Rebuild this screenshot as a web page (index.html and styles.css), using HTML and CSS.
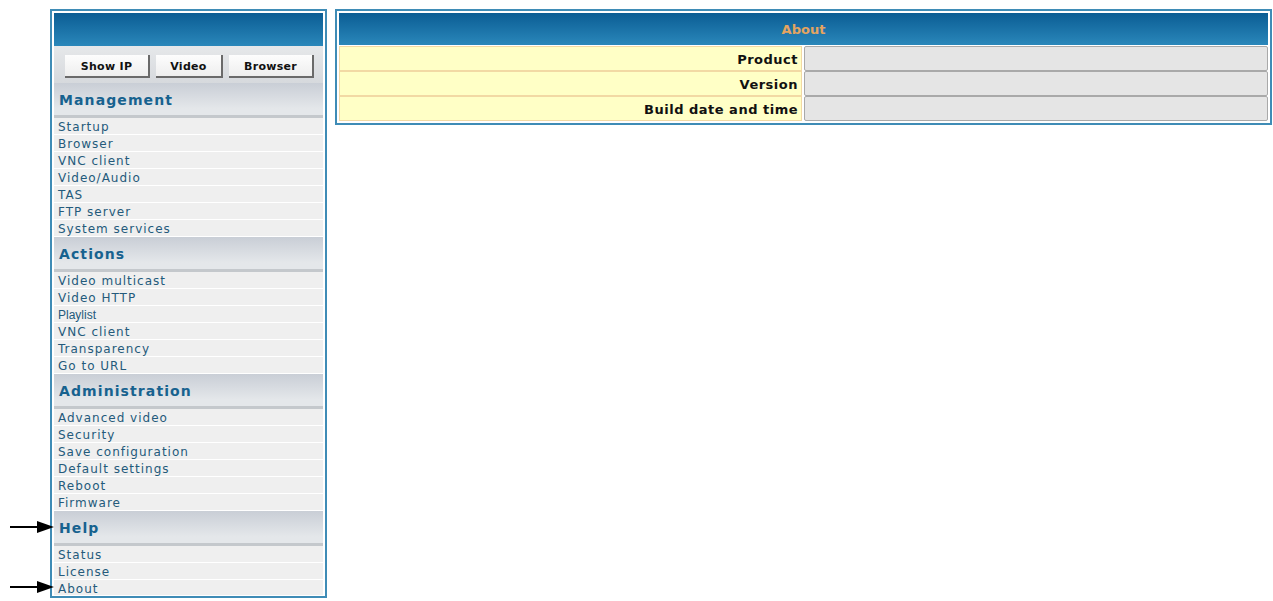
FILE: index.html
```html
<!DOCTYPE html>
<html lang="en">
<head>
    <meta charset="UTF-8">
    <title>About</title>
    <link rel="stylesheet" href="styles.css">
</head>
<body>
    <div class="page">
        <!-- Pointers next to the menu -->
        <div class="pointers">
            <svg class="arrow arrow-help" width="44" height="12" viewBox="0 0 44 12"><path d="M0 6 H30" stroke="#000" stroke-width="2"/><path d="M27 0 L44 6 L27 12 Z" fill="#000"/></svg>
            <svg class="arrow arrow-about" width="44" height="12" viewBox="0 0 44 12"><path d="M0 6 H30" stroke="#000" stroke-width="2"/><path d="M27 0 L44 6 L27 12 Z" fill="#000"/></svg>
        </div>

        <!-- Menu -->
        <div class="menu">
            <div class="menu-top"></div>
            <div class="toolbar">
                <button class="tool-btn btn-ip">Show IP</button>
                <button class="tool-btn btn-video">Video</button>
                <button class="tool-btn btn-browser">Browser</button>
            </div>

            <div class="section">Management</div>
            <a class="item" href="#">Startup</a>
            <a class="item" href="#">Browser</a>
            <a class="item" href="#">VNC client</a>
            <a class="item" href="#">Video/Audio</a>
            <a class="item" href="#">TAS</a>
            <a class="item" href="#">FTP server</a>
            <a class="item" href="#">System services</a>

            <div class="section">Actions</div>
            <a class="item" href="#">Video multicast</a>
            <a class="item" href="#">Video HTTP</a>
            <a class="item item-arial" href="#">Playlist</a>
            <a class="item" href="#">VNC client</a>
            <a class="item" href="#">Transparency</a>
            <a class="item" href="#">Go to URL</a>

            <div class="section">Administration</div>
            <a class="item" href="#">Advanced video</a>
            <a class="item" href="#">Security</a>
            <a class="item" href="#">Save configuration</a>
            <a class="item" href="#">Default settings</a>
            <a class="item" href="#">Reboot</a>
            <a class="item" href="#">Firmware</a>

            <div class="section">Help</div>
            <a class="item" href="#">Status</a>
            <a class="item" href="#">License</a>
            <a class="item" href="#">About</a>
        </div>

        <!-- About box -->
        <div class="about">
            <div class="about-title">About</div>
            <div class="row">
                <div class="label">Product</div>
                <div class="value"></div>
            </div>
            <div class="row">
                <div class="label">Version</div>
                <div class="value"></div>
            </div>
            <div class="row">
                <div class="label">Build date and time</div>
                <div class="value"></div>
            </div>
        </div>
    </div>
</body>
</html>
```

FILE: styles.css
```css
/* Page */
body {
    margin: 0;
    background: #fff;
    font-family: "DejaVu Sans", Verdana, sans-serif;
}

.page {
    display: flex;
    align-items: flex-start;
    padding: 9px 0 0 10px;
    position: relative;
}

/* Arrows */
.pointers {
    width: 40px;
    position: relative;
    align-self: stretch;
}

.arrow {
    position: absolute;
    left: 0;
}

.arrow-help {
    top: 512px;
}

.arrow-about {
    top: 572px;
}

/* Left menu */
.menu {
    width: 269px;
    border: 2px solid #3f8cb6;
    padding: 2px 2px 1px;
    background: #fff;
    display: flex;
    flex-direction: column;
}

.menu-top {
    height: 33px;
    background: linear-gradient(#0b5d94, #2a87ba);
}

.toolbar {
    height: 37px;
    display: flex;
    align-items: center;
    padding-left: 11px;
    gap: 6px;
    box-sizing: border-box;
    background: linear-gradient(#e6e8ea, #d6d9dd);
}

.tool-btn {
    height: 23px;
    border: none;
    border-right: 2px solid #6a6a6a;
    border-bottom: 2px solid #6a6a6a;
    background: linear-gradient(#fdfdfd, #eeeeee);
    font-family: "DejaVu Sans", Verdana, sans-serif;
    font-weight: bold;
    font-size: 11px;
    letter-spacing: 0.3px;
    color: #111;
    padding: 3px 0 0;
    margin-top: 3px;
}

.btn-ip {
    width: 85px;
}

.btn-video {
    width: 67px;
}

.btn-browser {
    width: 85px;
}

.section {
    height: 35px;
    box-sizing: border-box;
    padding: 9px 0 0 5px;
    background: linear-gradient(#c9ced6, #e4e7ea 80%);
    border-bottom: 3px solid #c4c8cc;
    color: #17628f;
    font-weight: bold;
    font-size: 14px;
    letter-spacing: 1.1px;
}

.item {
    display: block;
    height: 16px;
    line-height: 19px;
    padding-left: 4px;
    background: #efefef;
    border-bottom: 1px solid #fff;
    color: #245a7b;
    font-size: 12px;
    letter-spacing: 1px;
    text-decoration: none;
    overflow: hidden;
}

.item:last-child {
    height: 15px;
    border-bottom: none;
}

.item-arial {
    font-family: "Liberation Sans", Arial, sans-serif;
    letter-spacing: 0;
}

/* About box */
.about {
    margin-left: 8px;
    width: 929px;
    border: 2px solid #3f8cb6;
    padding: 2px;
    display: flex;
    flex-direction: column;
}

.about-title {
    height: 32px;
    margin-bottom: 1px;
    line-height: 34px;
    text-align: center;
    background: linear-gradient(#0b5d94, #2a87ba);
    color: #e5a460;
    font-weight: bold;
    font-size: 13px;
}

.row {
    display: flex;
    gap: 2px;
    height: 25px;
}

.label {
    width: 463px;
    box-sizing: border-box;
    background: #ffffc6;
    border: 1px solid #f2d9a4;
    text-align: right;
    padding: 5px 3px 0 0;
    line-height: 16px;
    font-weight: bold;
    font-size: 13px;
    letter-spacing: 0.5px;
    color: #111;
}

.value {
    flex: 1;
    background: #e5e5e5;
    border: 1px solid #a9a9a9;
    border-radius: 2px;
}
```
